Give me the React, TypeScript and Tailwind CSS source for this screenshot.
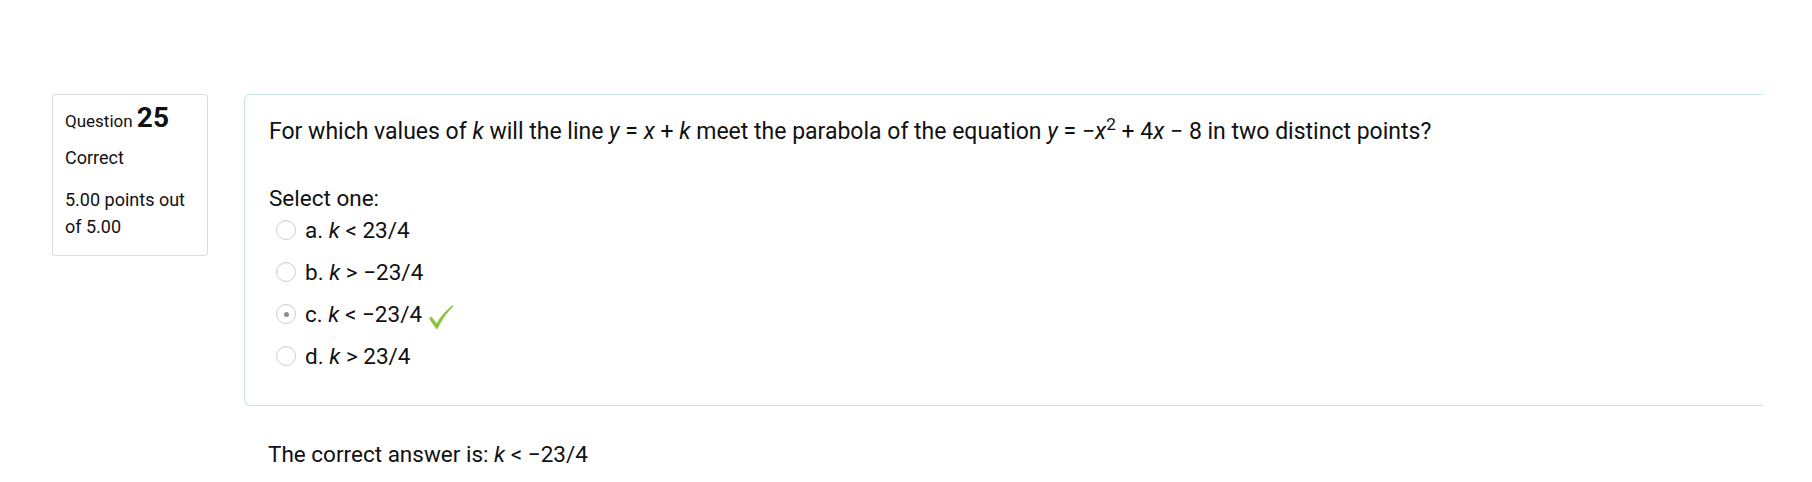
import React from 'react';

type Option = {
  letter: string;
  op: string;
  value: string;
  checked?: boolean;
  correct?: boolean;
};

const options: Option[] = [
  { letter: 'a', op: '<', value: '23/4' },
  { letter: 'b', op: '>', value: '\u221223/4' },
  { letter: 'c', op: '<', value: '\u221223/4', checked: true, correct: true },
  { letter: 'd', op: '>', value: '23/4' },
];

function Radio({ checked }: { checked?: boolean }) {
  return (
    <span className="w-5 h-5 shrink-0 rounded-full border border-[#d0d0d0] bg-white shadow-[inset_0_1px_1px_rgba(0,0,0,0.05)] flex items-center justify-center">
      {checked && <span className="w-[5px] h-[5px] rounded-full bg-[#8c8c8c]" />}
    </span>
  );
}

function CheckMark() {
  return (
    <svg width="26" height="26" viewBox="0 0 26 26" className="ml-[6px] mt-[6px]">
      <path
        d="M1 14.5 L3.4 12.4 L8.6 19.2 C12.8 12.2 18.4 5.6 24.6 1.2 L25.4 2.2 C19.2 8 13.8 15.6 9.8 24.6 L8.2 24.9 Z"
        fill="#8cc63f"
      />
    </svg>
  );
}

export default function App() {
  return (
    <div className="min-h-[482px] bg-white font-[Roboto,sans-serif] text-[#111] flex items-start pl-[52px] pt-[94px] pr-[49px]">
      {/* question info */}
      <div className="w-[156px] shrink-0 border border-[#dcdcdc] rounded-[3px] px-3 pt-[7px] pb-[15px] text-[18px]">
        <h3 className="text-[17px] leading-[32px] font-normal">
          Question <span className="text-[28px] font-bold leading-[32px]">25</span>
        </h3>
        <div className="mt-[7px] leading-[27px]">Correct</div>
        <div className="mt-[15px] leading-[27px]">5.00 points out of 5.00</div>
      </div>

      <div className="flex-1 ml-[36px]">
        <div className="border border-r-0 border-[#cce5ec] rounded-l-[6px] pl-6 pt-[21px] pb-[28px] text-[22.5px]">
          <p className="text-[23px] leading-[32px]">
            For which values of <i>k</i> will the line <i>y</i> = <i>x</i> + <i>k</i> meet the parabola of the
            equation <i>y</i> = {'\u2212'}
            <i>x</i>
            <sup>2</sup> + 4<i>x</i> {'\u2212'} 8 in two distinct points?
          </p>
          <div className="mt-[38px] leading-[24px]">Select one:</div>
          <div className="flex flex-col -mt-px">
            {options.map((o) => (
              <div key={o.letter} className="flex items-center h-[42px] pl-[7px]">
                <Radio checked={o.checked} />
                <span className="ml-[9px] leading-[42px]">
                  {o.letter}. <i>k</i> {o.op} {o.value}
                </span>
                {o.correct && <CheckMark />}
              </div>
            ))}
          </div>
        </div>
        <div className="mt-[32px] pl-6 text-[22.5px] leading-[32px]">
          The correct answer is: <i>k</i> &lt; {'\u2212'}23/4
        </div>
      </div>
    </div>
  );
}
